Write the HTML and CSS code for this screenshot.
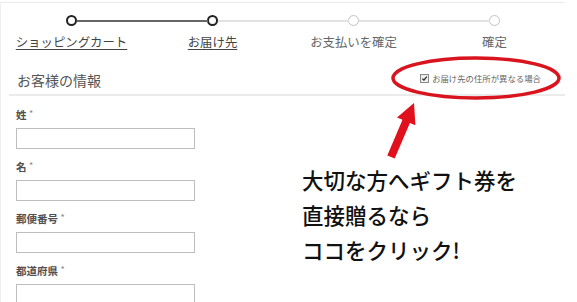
FILE: index.html
```html
<!DOCTYPE html>
<html lang="ja">
<head>
<meta charset="utf-8">
<link rel="stylesheet" href="styles.css">
</head>
<body>
<div class="page">
  <div class="card">
    <ol class="stepper">
      <li class="step done-right">
        <span class="dot dark"></span>
        <a class="step-label link">ショッピングカート</a>
      </li>
      <li class="step done-left">
        <span class="dot dark"></span>
        <a class="step-label link">お届け先</a>
      </li>
      <li class="step">
        <span class="dot"></span>
        <span class="step-label">お支払いを確定</span>
      </li>
      <li class="step last">
        <span class="dot"></span>
        <span class="step-label">確定</span>
      </li>
    </ol>

    <div class="section-head">
      <h2 class="section-title">お客様の情報</h2>
      <label class="diff-address">
        <span class="check"><svg viewBox="0 0 9 9" width="9" height="9"><path d="M1.8 4.6 L3.8 6.6 L7.4 2.2" fill="none" stroke="#222" stroke-width="1.6"/></svg></span>
        お届け先の住所が異なる場合
      </label>
    </div>

    <form class="form">
      <div class="field">
        <label class="field-label">姓 <span class="req">*</span></label>
        <span class="input"></span>
      </div>
      <div class="field">
        <label class="field-label">名 <span class="req">*</span></label>
        <span class="input"></span>
      </div>
      <div class="field">
        <label class="field-label">郵便番号 <span class="req">*</span></label>
        <span class="input"></span>
      </div>
      <div class="field">
        <label class="field-label">都道府県 <span class="req">*</span></label>
        <span class="input"></span>
      </div>
    </form>
  </div>

  <svg class="marks" width="577" height="302" viewBox="0 0 577 302">
    <ellipse cx="476" cy="78" rx="83" ry="20" fill="none" stroke="#d9141e" stroke-width="3.5"/>
    <polygon fill="#e0101c" points="387.3,155.4 402.5,119.8 397,117.5 414,103 415.4,125.3 409.9,123 394.7,158.6"/>
  </svg>

  <p class="callout">大切な方へギフト券を<br>直接贈るなら<br>ココをクリック!</p>
</div>
</body>
</html>
```

FILE: styles.css
```css
* { box-sizing: border-box; }
html, body { margin: 0; padding: 0; background: #fff; }
body {
  font-family: "Noto Sans CJK JP", "Noto Sans", sans-serif;
  color: #444;
}
.page {
  position: relative;
  width: 577px;
  height: 302px;
  overflow: hidden;
}
.card {
  margin-top: 2px;
  width: 565px;
  height: 300px;
  border-top: 1px solid #ececec;
  border-left: 1px solid #efefef;
}

/* stepper */
.stepper {
  list-style: none;
  margin: 0;
  padding: 12px 0 0;
  display: grid;
  grid-template-columns: repeat(4, 141px);
}
.step {
  position: relative;
  display: flex;
  flex-direction: column;
  align-items: center;
}
.step::before,
.step::after {
  content: "";
  position: absolute;
  top: 4.5px;
  height: 2px;
  background: #e2e2e2;
}
.step::before { left: 0; right: 50%; margin-right: 5px; }
.step::after { left: 50%; right: 0; margin-left: 5px; }
.step:first-child::before { display: none; }
.step.last::after { display: none; }
.step.done-right::after { background: #666; }
.step.done-left::before { background: #666; }
.dot {
  width: 11px;
  height: 11px;
  border-radius: 50%;
  border: 1px solid #c2c2c2;
  background: #fff;
}
.dot.dark { border: 2px solid #222; }
.step-label {
  margin-top: 8px;
  font-size: 12.4px;
  line-height: 16px;
  color: #666;
  white-space: nowrap;
}
.step-label.link {
  color: #444;
  text-decoration: underline;
  text-underline-offset: 2px;
}

/* section head */
.section-head {
  margin: 20px 0 0 8px;
  padding: 0 24px 4px 8px;
  display: flex;
  justify-content: space-between;
  align-items: center;
  border-bottom: 2px solid #ebebeb;
}
.section-title {
  margin: 0;
  font-size: 14px;
  line-height: 20px;
  font-weight: 400;
  color: #555;
}
.diff-address {
  display: flex;
  align-items: center;
  gap: 3px;
  font-size: 8.4px;
  color: #666;
  margin-top: -4px;
}
.check {
  display: inline-flex;
  width: 9px;
  height: 9px;
  border: 1px solid #888;
  background: #eee;
  align-items: center;
  justify-content: center;
}
.check svg { display: block; }

/* form */
.form {
  padding: 12px 0 0 15px;
  display: flex;
  flex-direction: column;
}
.field {
  display: flex;
  flex-direction: column;
  gap: 6px;
  margin-bottom: 11px;
}
.field-label {
  display: block;
  height: 14px;
  font-size: 10.5px;
  line-height: 14px;
  font-weight: 700;
  color: #505050;
}
.req {
  font-weight: 400;
  color: #888;
  font-size: 9px;
  line-height: 0;
  vertical-align: 2px;
}
.input {
  display: block;
  width: 179px;
  height: 21px;
  border: 1px solid #bdbdbd;
  background: #fff;
}

/* annotation overlay */
.marks {
  position: absolute;
  left: 0;
  top: 0;
  pointer-events: none;
}
.callout {
  position: absolute;
  left: 302px;
  top: 162px;
  margin: 0;
  font-size: 21.5px;
  line-height: 35px;
  font-weight: 500;
  color: #111;
  white-space: nowrap;
}
```
